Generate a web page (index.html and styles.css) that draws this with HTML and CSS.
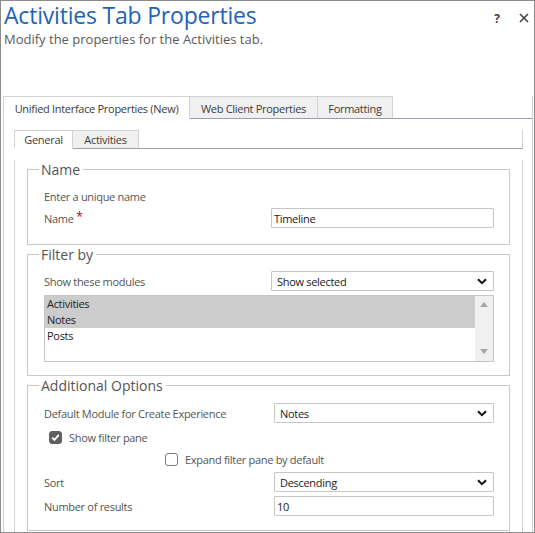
FILE: index.html
```html
<!DOCTYPE html>
<html>
<head>
<meta charset="utf-8">
<link rel="stylesheet" href="styles.css">
</head>
<body>
<div class="window">
  <header class="header">
    <div class="titles">
      <h1 class="title">Activities Tab Properties</h1>
      <p class="subtitle">Modify the properties for the Activities tab.</p>
    </div>
    <div class="actions">
      <span class="help">?</span>
      <svg class="close" width="10" height="10" viewBox="0 0 10 10"><path d="M1 1L9 9M9 1L1 9" stroke="#444" stroke-width="1.6" fill="none"/></svg>
    </div>
  </header>

  <div class="outer">
    <div class="tabstrip">
      <div class="tab tab-active tab-w1">Unified Interface Properties (New)</div>
      <div class="tab tab-w2">Web Client Properties</div>
      <div class="tab tab-w3">Formatting</div>
      <div class="tab-fill"></div>
    </div>
    <div class="panel">
      <div class="tabstrip inner-strip">
        <div class="tab itab tab-active itab-w1">General</div>
        <div class="tab itab itab-w2">Activities</div>
        <div class="tab-fill"></div>
      </div>
      <div class="inner-panel">
        <fieldset class="group group-name">
          <legend>Name</legend>
          <div class="hint">Enter a unique name</div>
          <div class="row row-a">
            <label class="label">Name <span class="req">*</span></label>
            <div class="input">Timeline</div>
          </div>
        </fieldset>

        <fieldset class="group group-filter">
          <legend>Filter by</legend>
          <div class="row row-a">
            <label class="label">Show these modules</label>
            <div class="select"><span>Show selected</span><svg class="chev" width="10" height="7" viewBox="0 0 10 7"><path d="M1 1.2L5 5.2L9 1.2" stroke="#111" stroke-width="2" fill="none"/></svg></div>
          </div>
          <div class="listbox">
            <div class="items">
              <div class="item item-sel">Activities</div>
              <div class="item item-sel">Notes</div>
              <div class="item">Posts</div>
            </div>
            <div class="scrollbar">
              <svg width="8" height="5" viewBox="0 0 8 5"><path d="M0 5L4 0L8 5Z" fill="#a6a6a6"/></svg>
              <svg width="8" height="5" viewBox="0 0 8 5"><path d="M0 0L4 5L8 0Z" fill="#a6a6a6"/></svg>
            </div>
          </div>
        </fieldset>

        <fieldset class="group group-add">
          <legend>Additional Options</legend>
          <div class="row row-b row-module">
            <label class="label">Default Module for Create Experience</label>
            <div class="select"><span>Notes</span><svg class="chev" width="10" height="7" viewBox="0 0 10 7"><path d="M1 1.2L5 5.2L9 1.2" stroke="#111" stroke-width="2" fill="none"/></svg></div>
          </div>
          <div class="check-row check-1">
            <span class="box box-on"><svg width="11" height="11" viewBox="0 0 11 11"><path d="M2.2 5.6L4.5 7.9L8.8 2.8" stroke="#fff" stroke-width="1.8" fill="none"/></svg></span>
            <span class="check-label">Show filter pane</span>
          </div>
          <div class="check-row check-2">
            <span class="box"></span>
            <span class="check-label">Expand filter pane by default</span>
          </div>
          <div class="row row-b row-sort">
            <label class="label">Sort</label>
            <div class="select"><span>Descending</span><svg class="chev" width="10" height="7" viewBox="0 0 10 7"><path d="M1 1.2L5 5.2L9 1.2" stroke="#111" stroke-width="2" fill="none"/></svg></div>
          </div>
          <div class="row row-b row-num">
            <label class="label">Number of results</label>
            <div class="input">10</div>
          </div>
        </fieldset>
      </div>
    </div>
  </div>
</div>
</body>
</html>
```

FILE: styles.css
```css
* { box-sizing: border-box; }
html, body { margin: 0; padding: 0; background: #fff; }
body { font-family: "Open Sans", "Noto Sans", sans-serif; color: #444; }

.window {
  width: 535px;
  height: 533px;
  border: 1px solid #8c8c8c;
  overflow: hidden;
  background: #fff;
}

.header {
  display: flex;
  justify-content: space-between;
  height: 95px;
  padding-left: 3px;
}
.title {
  margin: 0;
  font-weight: 400;
  font-size: 23px;
  line-height: 28px;
  color: #1f63b6;
  letter-spacing: -0.2px;
}
.subtitle {
  margin: 2px 0 0 0;
  font-size: 13px;
  line-height: 17px;
  color: #5a5a5a;
}
.actions {
  display: flex;
  align-items: center;
  gap: 19px;
  height: 34px;
  padding-right: 5px;
}
.help { font-size: 12px; font-weight: 700; color: #444; }

.outer { margin: 0 1px 0 2px; }

.tabstrip { display: flex; align-items: stretch; height: 23px; }
.tab {
  display: flex;
  align-items: center;
  justify-content: center;
  padding-top: 2px;
  font-size: 11px;
  letter-spacing: -0.3px;
  color: #3c3c3c;
  background: #f0f0f0;
  border-top: 1px solid #d2d2d2;
  border-right: 1px solid #d2d2d2;
  border-bottom: 1px solid #9d9ca8;
}
.tab-active {
  background: #fff;
  border-left: 1px solid #d2d2d2;
  border-bottom: 1px solid #fff;
}
.tab-w1 { width: 187px; }
.tab-w2 { width: 128px; }
.tab-w3 { width: 75px; }
.tab-fill { flex: 1; border-bottom: 1px solid #9d9ca8; border-right: 1px solid #d2d2d2; }

.panel {
  border-left: 1px solid #d2d2d2;
  border-right: 1px solid #d2d2d2;
  padding: 11px 9px 0 10px;
  height: 420px;
}
.inner-strip { height: 19px; }
.itab { padding-top: 0; }
.itab-w1 { width: 59px; }
.itab-w2 { width: 66px; }

.inner-panel {
  border-left: 1px solid #d2d2d2;
  border-right: 1px solid #d2d2d2;
  padding: 0 12px 0 12px;
  height: 400px;
}

.group {
  margin: 0;
  border: 1px solid #c8c8c8;
  padding: 0 15px 0 16px;
}
.group legend {
  margin-left: -5px;
  padding: 2px 3px 0 2px;
  font-size: 14px;
  line-height: 16px;
  color: #555;
}
.group-name { margin-top: 11px; padding-bottom: 16px; }
.group-filter { margin-top: 0; padding-bottom: 13px; }
.group-add { margin-top: 0; padding-bottom: 14px; }

.hint, .label, .check-label, .input, .select, .item {
  font-size: 11px;
  letter-spacing: -0.3px;
}
.hint { line-height: 16px; margin-top: 11px; color: #555; }

.row { display: grid; align-items: center; }
.row-a { grid-template-columns: 227px 1fr; }
.row-b { grid-template-columns: 230px 1fr; }
.group-name .row-a { margin-top: 3px; }
.group-filter .row-a { margin-top: 8px; }

.label { color: #555; }
.req { color: #c00000; font-size: 12px; position: relative; top: -2px; }

.input, .select {
  height: 20px;
  border: 1px solid #c6c6c6;
  border-radius: 1px;
  color: #222;
  display: flex;
  align-items: center;
  padding: 0 0 0 2px;
}
.select { justify-content: space-between; padding: 0 6px 0 5px; }
.chev { display: block; }

.listbox {
  margin-top: 4px;
  height: 67px;
  border: 1px solid #c6c6c6;
  display: flex;
}
.items { flex: 1; }
.item { height: 16px; line-height: 16px; color: #222; padding-left: 2px; }
.item-sel { background: #cccccc; }
.scrollbar {
  width: 18px;
  background: #f0f0f0;
  display: flex;
  flex-direction: column;
  justify-content: space-between;
  align-items: center;
  padding: 6px 0 7px;
}
.scrollbar svg { display: block; }

.row-module { margin-top: 9px; }
.row-sort { margin-top: 2px; }
.row-num { margin-top: 4px; }

.check-row { display: flex; align-items: center; height: 22px; gap: 7px; }
.check-1 { margin-top: 3px; padding-left: 5px; }
.check-2 { padding-left: 121px; }
.check-label { color: #555; }
.box {
  width: 13px;
  height: 13px;
  border: 1px solid #7a7a7a;
  border-radius: 3px;
  background: #fff;
  display: flex;
  align-items: center;
  justify-content: center;
}
.box-on { background: #5f5f5f; border-color: #5f5f5f; }
.box svg { display: block; }
```
